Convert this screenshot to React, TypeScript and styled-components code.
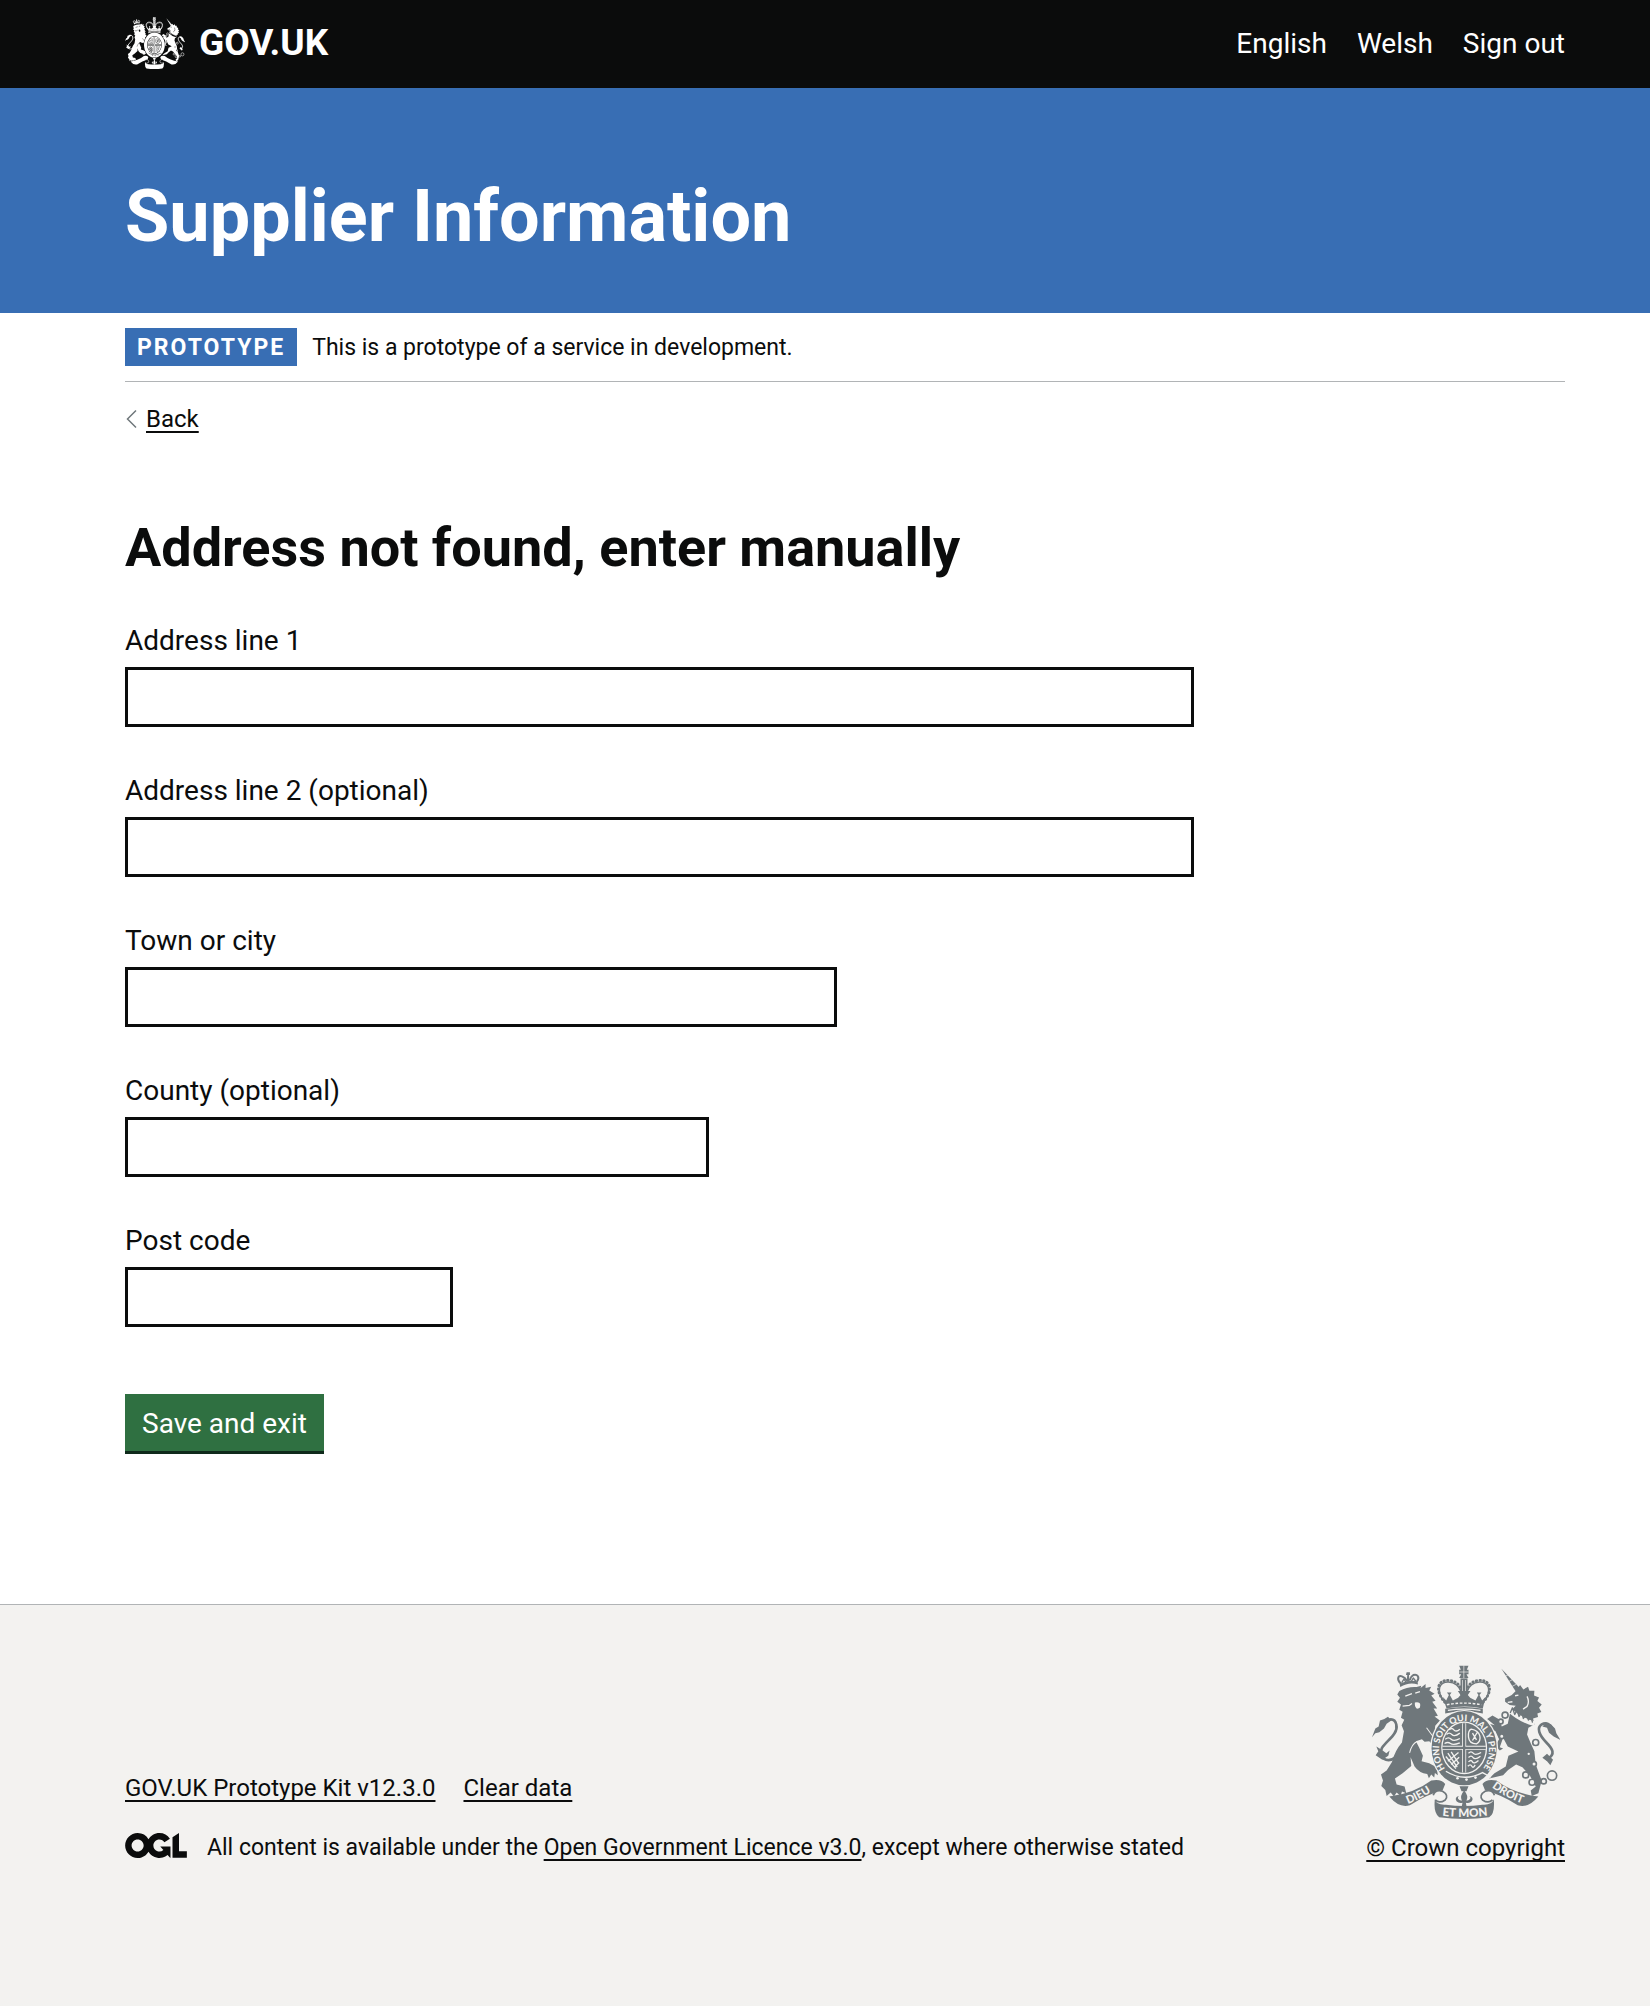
import React from "react";
import styled, { createGlobalStyle } from "styled-components";

const ink = "#0b0c0c";
const blue = "#386eb4";
const sans = `Roboto, "Liberation Sans", Arial, sans-serif`;

const GlobalStyle = createGlobalStyle`
  *, *::before, *::after { box-sizing: border-box; }
  body {
    margin: 0;
    background: #ffffff;
    color: ${ink};
    font-family: ${sans};
  }
`;

const Page = styled.div`
  display: flex;
  flex-direction: column;
  min-height: 100vh;
`;

const Container = styled.div`
  margin: 0 85px 0 125px;
`;

const Header = styled.header`
  background: ${ink};
  color: #ffffff;
`;

const HeaderRow = styled(Container)`
  display: flex;
  align-items: center;
  justify-content: space-between;
  min-height: 88px;
`;

const Logo = styled.a`
  display: flex;
  align-items: center;
  gap: 14px;
  padding-bottom: 2px;
  color: inherit;
  font-size: 37px;
  font-weight: 700;
  line-height: 40px;
  text-decoration: none;
`;

const Nav = styled.nav`
  display: flex;
  gap: 30px;
`;

const NavLink = styled.a`
  color: inherit;
  font-size: 28px;
  line-height: 36px;
  text-decoration: none;
`;

const Masthead = styled.div`
  padding: 89px 0 56px;
  background: ${blue};
  color: #ffffff;
`;

const ServiceName = styled.p`
  margin: 0;
  font-size: 72px;
  font-weight: 700;
  line-height: 80px;
`;

const PhaseBanner = styled.div`
  display: flex;
  align-items: center;
  gap: 15px;
  padding: 15px 0;
  border-bottom: 1px solid #b1b4b6;
  font-size: 23px;
  line-height: 32px;
`;

const PhaseTag = styled.strong`
  padding: 4px 12px 2px;
  background: ${blue};
  color: #ffffff;
  letter-spacing: 2px;
`;

const PhaseText = styled.span`
  padding-top: 2px;
`;

const TextLink = styled.a`
  color: ${ink};
  text-decoration: underline;
  text-decoration-thickness: 2px;
  text-decoration-skip-ink: none;
  text-underline-offset: 4px;
`;

const BackRow = styled.div`
  display: flex;
  align-items: center;
  gap: 8px;
  margin-top: 22px;
  font-size: 24px;
  line-height: 30px;
`;

const Main = styled.main`
  padding: 84px 0 150px;
`;

const Title = styled.h1`
  margin: 0 0 44px;
  font-size: 54px;
  font-weight: 700;
  line-height: 60px;
`;

const Field = styled.div`
  display: flex;
  flex-direction: column;
  gap: 7px;
  margin-bottom: 45px;
`;

const Label = styled.label`
  font-size: 28px;
  line-height: 38px;
`;

const Input = styled.input<{ $max: number }>`
  width: 100%;
  max-width: ${(p) => p.$max}px;
  height: 60px;
  padding: 8px;
  border: 3px solid ${ink};
  border-radius: 0;
  background: #ffffff;
  font: 28px/36px ${sans};
`;

const Button = styled.button`
  margin-top: 22px;
  padding: 12px 17px 9px;
  border: 0;
  border-bottom: 3px solid #0f2a1b;
  background: #2f7041;
  color: #ffffff;
  font: 28px/36px ${sans};
`;

const Footer = styled.footer`
  flex: 1;
  padding: 60px 0;
  border-top: 1px solid #b1b4b6;
  background: #f3f2f0;
  font-size: 24px;
  line-height: 30px;
`;

const FooterRow = styled(Container)`
  display: flex;
  align-items: flex-end;
  justify-content: space-between;
`;

const FooterMeta = styled.div`
  display: flex;
  flex-direction: column;
  gap: 30px;
`;

const FooterLinks = styled.div`
  display: flex;
  gap: 28px;
`;

const Licence = styled.div`
  display: flex;
  gap: 20px;
  font-size: 23px;
`;

const Copyright = styled.div`
  display: flex;
  flex-direction: column;
  align-items: center;
  gap: 14px;
  color: #6f777b;
`;

type ArmsProps = { width: number; height: number; paper: string; lettering?: boolean };

function RoyalArms({ width, height, paper, lettering }: ArmsProps) {
  const word = {
    fill: paper,
    stroke: "none",
    fontFamily: "Lato, sans-serif",
    fontWeight: 900,
  } as const;
  const line = { fill: "none", stroke: "currentColor", strokeLinecap: "round", strokeLinejoin: "round" } as const;
  return (
    <svg
      width={width}
      height={height}
      viewBox="68 74 565 461"
      preserveAspectRatio="none"
      fill="currentColor"
      aria-hidden="true"
    >
      {/* lion */}
      <path d="M153 140 Q178 124 206 132 L205 123 Q178 117 151 130 Z" />
      <path d="M153 128 C142 116 146 104 158 108 Q168 112 172 120 M204 122 C212 110 204 100 192 104 Q184 108 182 118" {...line} strokeWidth="6" />
      <path d="M172 96h10v8h-3l2 20h-9l2-20h-4z" />
      <path d="M158 126l6-10 5 8M187 122l5-9 7 9" {...line} strokeWidth="4" />
      <path d="M150 152 Q176 138 202 140 L216 136 L214 143 L229 131 L229 143 L246 139 L240 150 L256 160 L246 165 L259 181 L249 184 L264 204 L253 204 L266 226 L256 228 L272 240 L258 256 L256 276 L268 304 L274 334 L262 338 L252 314 L240 302 L226 304 L218 296 L200 302 L210 322 L221 346 L217 362 L240 368 L262 380 L266 404 L257 397 L255 411 L246 402 L239 413 L234 400 Q210 398 196 378 L184 350 L186 376 L160 398 L137 414 L142 432 L166 438 L171 458 L158 453 L154 466 L142 456 L134 468 L124 456 L112 466 L108 448 L96 436 L101 420 L95 402 L112 390 L128 364 Q137 330 158 306 L164 272 L157 254 L165 238 L155 232 L160 214 L150 208 L155 192 L144 184 L152 172 L144 162 Z" />
      <path d="M168 167l20-7M198 158l14-4M160 197l20-2 8-6M200 196l12 4" fill="none" stroke={paper} strokeWidth="4" />
      <path d="M197 186q16-3 16 8t-10 11q-8-8-6-19z" fill={paper} />
      <path d="M203 303q-16 8-22 34M232 262l22 30" fill="none" stroke={paper} strokeWidth="3" />
      <path d="M140 350 C112 370 84 350 98 322 C112 300 148 280 141 252 C136 230 115 236 103 246" {...line} strokeWidth="8" />
      <path d="M68 290 L78 264 L88 258 L92 240 L105 236 L116 229 L126 240 L112 250 L104 264 L90 275 L78 278 Z" />
      <path d="M79 344l8-12-6-14 16 10 14 10 10-8-4 16-18 12z" />

      {/* unicorn */}
      <path d="M457 85 L512 143 L500 153 Z" />
      <path d="M468 108l10-5M478 124l12-6M489 138l12-6" stroke={paper} strokeWidth="2" />
      <path d="M500 152 L513 134 L523 147 L537 139 L541 151 L556 151 L555 165 L570 171 L565 182 L578 192 L570 202 L577 215 L565 219 L567 230 L552 234 L556 252 L538 262 L534 282 L545 308 L556 332 L560 372 L578 420 L568 458 L548 466 L545 450 L560 438 L543 406 L520 380 L501 372 Q477 386 462 404 L420 414 L436 398 L470 378 L478 346 L508 333 L476 318 L462 292 L452 320 L462 324 L452 330 L438 316 L450 296 L439 272 L422 262 L419 290 L410 270 L415 248 L437 254 L414 236 L430 225 L452 238 L458 258 L476 250 L482 222 L490 206 L500 196 L482 194 L468 184 L468 174 L488 164 Z" />
      <path d="M480 208 Q512 238 556 250" fill="none" stroke={paper} strokeWidth="14" />
      <path d="M484 216l6-14 7 20 7-13 6 19 8-12 5 18 9-11 6 16 8-10 4 16" {...line} strokeWidth="4" />
      <path d="M498 166l10-2M476 186l14-2M534 168q8 16 0 30l-12 8" fill="none" stroke={paper} strokeWidth="4" />
      <path d="M580 352 L594 340 L612 358 L604 374 L594 362 Z" />
      <path d="M594 356 C622 342 610 324 592 306 C570 284 562 262 578 252 C592 244 604 252 610 264" {...line} strokeWidth="8" />
      <path d="M580 258 L592 246 L606 252 L618 264 L622 278 L634 298 L614 288 L600 277 L594 262 Z" />
      <g fill={paper} stroke="currentColor" strokeWidth="5">
        <circle cx="468" cy="224" r="9" />
        <circle cx="455" cy="243" r="7" />
        <circle cx="458" cy="287" r="7" />
        <circle cx="560" cy="306" r="9" />
        <circle cx="539" cy="340" r="6" />
        <circle cx="555" cy="370" r="7" />
        <circle cx="530" cy="403" r="9" />
        <circle cx="549" cy="425" r="9" />
        <circle cx="584" cy="422" r="8" />
        <circle cx="609" cy="405" r="14" />
      </g>

      {/* crown */}
      <path d="M330 76h28l-5 12h5v14h-6l6 11h-28l6-11h-6V88h5z" />
      <path d="M344 75v38M331 95h27" stroke={paper} strokeWidth="2" />
      <path d="M287 186 C255 150 265 118 298 120 Q329 122 337 150 M402 186 C434 150 424 118 391 120 Q360 122 352 150" {...line} strokeWidth="8" strokeDasharray="2 9" />
      <path d="M285 182 C259 150 271 124 298 125 Q327 127 336 155 M404 182 C430 150 418 124 391 125 Q362 127 353 155" {...line} strokeWidth="4" />
      <path d="M334 114h21v50h-21z" />
      <path d="M340 119v40M349 119v40" stroke={paper} strokeWidth="2" />
      <path d="M281 170l10 10 8-16-6-8h14l-5 8 9 16 16-8 7-8-8-12h38l-8 12 7 8 16 8 9-16-5-8h14l-6 8 8 16 10-10-8 34q-54-12-109 0z" />
      <path d="M293 193q51-10 104 0" fill="none" stroke={paper} strokeWidth="4" strokeDasharray="8 5" />
      <path d="M288 205q56-11 113 0v14q-56-13-113 0z" />
      <path d="M296 210q48-8 98 0" fill="none" stroke={paper} strokeWidth="4" />

      {/* garter and shield */}
      <ellipse cx="345" cy="323" rx="102" ry="114" fill={paper} />
      <ellipse cx="345" cy="323" rx="98" ry="111" />
      <ellipse cx="345" cy="322" rx="69" ry="79" fill={paper} />
      <ellipse cx="345" cy="322" rx="65" ry="75" />
      <path d="M345 248v148M280 322h130" stroke={paper} strokeWidth="12" />
      <path d="M345 248v148M280 322h130" stroke="currentColor" strokeWidth="7" />
      <g fill="none" stroke={paper} strokeWidth="4">
        <path d="M300 268q8-8 14 0t18-2M292 282q8-8 16 0t24-4M288 296q10-8 18 0t26-2M286 309q10-6 18 0t28-2" />
        <path d="M366 266q22 4 26 20t-10 24q-22 0-24-20t8-24zM370 278l12 20M384 276l-14 24" />
        <path d="M296 338l28 42M306 334l22 34M290 348l30 36M328 336l-32 26M330 350l-24 22M330 366l-14 14" />
        <path d="M358 338q8-8 14 0t24-2M358 351q8-8 14 0t22-4M358 364q8-8 12 0t18-4M356 377q8-8 12 0t10-4" />
      </g>
      <path d="M290 392q54 34 110 4l26 14" fill="none" stroke={paper} strokeWidth="4" />
      <circle cx="325" cy="413" r="4" fill={paper} />
      <circle cx="352" cy="417" r="4" fill={paper} />
      <circle cx="379" cy="411" r="4" fill={paper} />
      {lettering && (
        <>
          <path id="garter-line" d="M288 384 A75 86 0 1 1 404 380" fill="none" />
          <text fontSize="27" {...word}>
            <textPath href="#garter-line">HONI SOIT QUI MAL Y PENSE</textPath>
          </text>
        </>
      )}

      {/* scroll */}
      <path d="M120 468 Q196 458 246 420 Q276 414 288 430 L280 450 Q232 462 182 494 Q150 504 120 468 Z" />
      <path d="M568 468 Q492 458 442 420 Q412 414 400 430 L408 450 Q456 462 506 494 Q538 504 568 468 Z" />
      <path d="M252 464 Q258 446 280 452 Q300 464 288 478 Q270 490 258 478 M436 464 Q430 446 408 452 Q388 464 400 478 Q418 490 430 478" fill={paper} stroke="currentColor" strokeWidth="5" />
      <path d="M257 476 Q262 494 290 492 Q345 500 400 492 Q428 494 434 476 Q438 520 420 530 Q345 540 270 530 Q252 516 257 476 Z" />
      <path d="M331 437h27l-6 15h-15zM345 450q14 16 7 30 18-4 9-14 14 4 7 16-8 8-18 4l2 10h-14l2-10q-10 4-18-4-7-12 7-16-9 10 9 14-7-14 7-30z" />
      {lettering && (
        <>
          <path id="scroll-left" d="M176 490 Q218 474 262 442" fill="none" />
          <path id="scroll-right" d="M428 440 Q470 472 530 492" fill="none" />
          <path id="scroll-centre" d="M279 525 Q345 533 416 525" fill="none" />
          <text fontSize="33" {...word}>
            <textPath href="#scroll-left">DIEU</textPath>
          </text>
          <text fontSize="33" {...word}>
            <textPath href="#scroll-right">DROIT</textPath>
          </text>
          <text fontSize="35" {...word}>
            <textPath href="#scroll-centre">ET MON</textPath>
          </text>
        </>
      )}
    </svg>
  );
}

function OglLogo() {
  return (
    <svg width="62" height="25" viewBox="0 0 483.2 195.7" fill="currentColor" role="img" aria-label="Open Government Licence">
      <path d="M421.5 142.8V.1l-50.7 32.3v161.1h112.4v-50.7zm-122.3-9.6A47.12 47.12 0 0 1 221 97.8c0-26 21.1-47.1 47.1-47.1 16.7 0 31.4 8.7 39.7 21.8l42.7-27.2A97.63 97.63 0 0 0 268.1 0c-36.5 0-68.3 20.1-85.1 49.7A98 98 0 0 0 97.8 0C43.9 0 0 43.9 0 97.8s43.9 97.8 97.8 97.8c36.5 0 68.3-20.1 85.1-49.7a97.76 97.76 0 0 0 149.6 25.4l19.4 22.2h3v-87.8h-80l24.3 27.5zM97.8 145c-26 0-47.1-21.1-47.1-47.1s21.1-47.1 47.1-47.1 47.1 21.1 47.1 47.1S123.8 145 97.8 145" />
    </svg>
  );
}

const fields = [
  { id: "address-line-1", label: "Address line 1", max: 1069 },
  { id: "address-line-2", label: "Address line 2 (optional)", max: 1069 },
  { id: "town", label: "Town or city", max: 712 },
  { id: "county", label: "County (optional)", max: 584 },
  { id: "postcode", label: "Post code", max: 328 },
];

export default function App() {
  return (
    <Page>
      <GlobalStyle />
      <Header>
        <HeaderRow>
          <Logo href="#">
            <RoyalArms width={60} height={52} paper={ink} />
            GOV.UK
          </Logo>
          <Nav>
            <NavLink href="#">English</NavLink>
            <NavLink href="#">Welsh</NavLink>
            <NavLink href="#">Sign out</NavLink>
          </Nav>
        </HeaderRow>
      </Header>
      <Masthead>
        <Container>
          <ServiceName>Supplier Information</ServiceName>
        </Container>
      </Masthead>
      <Container>
        <PhaseBanner>
          <PhaseTag>PROTOTYPE</PhaseTag>
          <PhaseText>This is a prototype of a service in development.</PhaseText>
        </PhaseBanner>
        <BackRow>
          <svg width="13" height="20" viewBox="0 0 13 20" fill="none" stroke="#6f777b" strokeWidth="1.5" aria-hidden="true">
            <path d="M11 1.5 2.5 10l8.500 8.500" />
          </svg>
          <TextLink href="#">Back</TextLink>
        </BackRow>
        <Main>
          <Title>Address not found, enter manually</Title>
          <form onSubmit={(e) => e.preventDefault()}>
            {fields.map((f) => (
              <Field key={f.id}>
                <Label htmlFor={f.id}>{f.label}</Label>
                <Input id={f.id} name={f.id} type="text" $max={f.max} />
              </Field>
            ))}
            <Button type="submit">Save and exit</Button>
          </form>
        </Main>
      </Container>
      <Footer>
        <FooterRow>
          <FooterMeta>
            <FooterLinks>
              <TextLink href="#">GOV.UK Prototype Kit v12.3.0</TextLink>
              <TextLink href="#">Clear data</TextLink>
            </FooterLinks>
            <Licence>
              <OglLogo />
              <span>
                All content is available under the <TextLink href="#">Open Government Licence v3.0</TextLink>, except where
                otherwise stated
              </span>
            </Licence>
          </FooterMeta>
          <Copyright>
            <RoyalArms width={188} height={154} paper="#f3f2f0" lettering />
            <TextLink href="#">© Crown copyright</TextLink>
          </Copyright>
        </FooterRow>
      </Footer>
    </Page>
  );
}
